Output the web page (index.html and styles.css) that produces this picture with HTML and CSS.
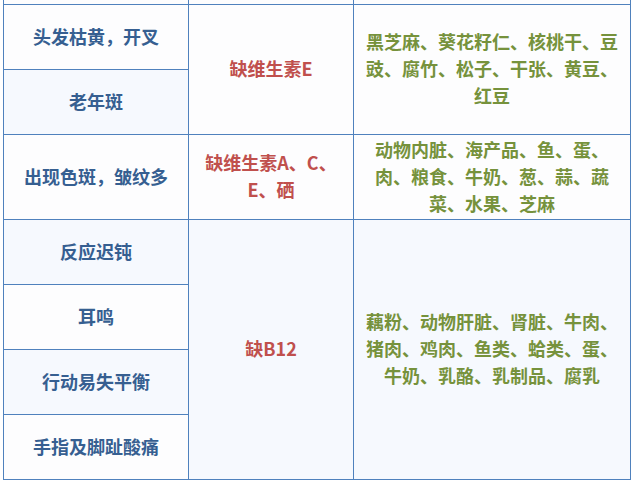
FILE: index.html
```html
<!DOCTYPE html>
<html lang="zh">
<head>
<meta charset="utf-8">
<link rel="stylesheet" href="styles.css">
</head>
<body>
<table class="diet">
  <colgroup>
    <col class="c1"><col class="c2"><col class="c3">
  </colgroup>
  <tr class="sliver"><td></td><td></td><td></td></tr>
  <tr class="r w">
    <td class="sym">头发枯黄，开叉</td>
    <td class="lack" rowspan="2">缺维生素E</td>
    <td class="food" rowspan="2">黑芝麻、葵花籽仁、核桃干、豆豉、腐竹、松子、干张、黄豆、红豆</td>
  </tr>
  <tr class="r b">
    <td class="sym">老年斑</td>
  </tr>
  <tr class="r tall w">
    <td class="sym">出现色斑，皱纹多</td>
    <td class="lack">缺维生素A、C、E、硒</td>
    <td class="food">动物内脏、海产品、鱼、蛋、肉、粮食、牛奶、葱、蒜、蔬菜、水果、芝麻</td>
  </tr>
  <tr class="r b">
    <td class="sym">反应迟钝</td>
    <td class="lack" rowspan="4">缺B12</td>
    <td class="food" rowspan="4">藕粉、动物肝脏、肾脏、牛肉、猪肉、鸡肉、鱼类、蛤类、蛋、牛奶、乳酪、乳制品、腐乳</td>
  </tr>
  <tr class="r w">
    <td class="sym">耳鸣</td>
  </tr>
  <tr class="r b">
    <td class="sym">行动易失平衡</td>
  </tr>
  <tr class="r w">
    <td class="sym">手指及脚趾酸痛</td>
  </tr>
</table>
</body>
</html>
```
FILE: styles.css
```css
html, body {
  margin: 0;
  padding: 0;
  background: #ffffff;
}
body {
  padding-left: 3px;
  font-family: "Noto Sans CJK SC", "Noto Sans", sans-serif;
}
.diet {
  border-collapse: collapse;
  table-layout: fixed;
  width: 627px;
}
.c1 { width: 185px; }
.c2 { width: 165px; }
.c3 { width: 277px; }
.diet td {
  border: 1px solid #4f81bd;
  text-align: center;
  vertical-align: middle;
  font-weight: bold;
  font-size: 18px;
  line-height: 27px;
  padding: 0 8px 2px;
}
.sliver td {
  border-top: none;
  height: 4px;
  padding: 0;
  line-height: 0;
  background: #fdfdfe;
}
.r { height: 65px; }
.r.tall { height: 85px; }
.w td { background: #fdfdfe; }
.b td { background: #f6f9fe; }
.sym { color: #365f91; }
.lack { color: #c0504d; }
.food { color: #76923c; }
```
